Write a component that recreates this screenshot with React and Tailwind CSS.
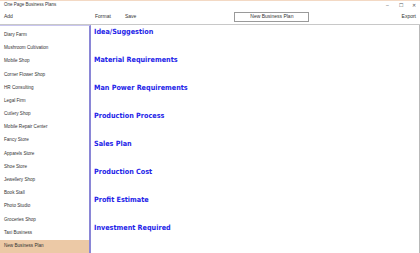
import React from "react";

const plans = [
  "Diary Farm",
  "Mushroom Cultivation",
  "Mobile Shop",
  "Corner Flower Shop",
  "HR Consulting",
  "Legal Firm",
  "Cutlery Shop",
  "Mobile Repair Center",
  "Fancy Store",
  "Apparels Store",
  "Shoe Store",
  "Jewellery Shop",
  "Book Stall",
  "Photo Studio",
  "Groceries Shop",
  "Taxi Business",
  "New Business Plan",
];

const sections = [
  "Idea/Suggestion",
  "Material Requirements",
  "Man Power Requirements",
  "Production Process",
  "Sales Plan",
  "Production Cost",
  "Profit Estimate",
  "Investment Required",
];

export default function App() {
  return (
    <div className="w-[420px] h-[253px] overflow-hidden bg-white flex flex-col font-['Liberation_Sans',Arial,sans-serif] text-[#222]">
      {/* title bar */}
      <div className="h-[10px] flex items-center border-t border-[#f3d9c4]">
        <span className="pl-[4px] text-[4.5px] text-[#333]">One Page Business Plans</span>
        <div className="ml-auto flex items-center text-[5px] text-[#555]">
          <span className="w-[13px] text-center">–</span>
          <span className="w-[13px] text-center">☐</span>
          <span className="w-[13px] text-center">✕</span>
        </div>
      </div>

      {/* toolbar */}
      <div className="h-[14px] flex items-center text-[5px] text-[#333]">
        <span className="pl-[4px] w-[95px]">Add</span>
        <span className="w-[30px]">Format</span>
        <span>Save</span>
        <div className="ml-[98px] w-[75px] h-[10px] border border-[#9a9a9a] flex items-center justify-center">
          New Business Plan
        </div>
        <span className="ml-auto pr-[4px]">Export</span>
      </div>

      <div className="flex-1 flex border-t border-[#c8c8c8] min-h-0">
        {/* sidebar */}
        <div className="w-[91px] shrink-0 border-r-2 border-[#8a86d6] border-t border-t-[#c9c6ef] pt-[2.8px] flex flex-col">
          {plans.map((p, i) => (
            <div
              key={p}
              className={
                "h-[13.2px] shrink-0 flex items-center pl-[4px] text-[4.6px] text-[#333] " +
                (i === plans.length - 1 ? "bg-[#ecc9a6]" : "")
              }
            >
              {p}
            </div>
          ))}
        </div>

        {/* content */}
        <div className="flex-1 border-r border-[#b8b8b8] pl-[3px] pt-[2px] flex flex-col">
          {sections.map((s) => (
            <div key={s} className="h-[28px] shrink-0 text-[7.2px] leading-[10px] font-bold font-stretch-condensed text-[#2424e8] font-['DejaVu_Sans',Verdana,sans-serif]">
              {s}
            </div>
          ))}
        </div>
      </div>
    </div>
  );
}
